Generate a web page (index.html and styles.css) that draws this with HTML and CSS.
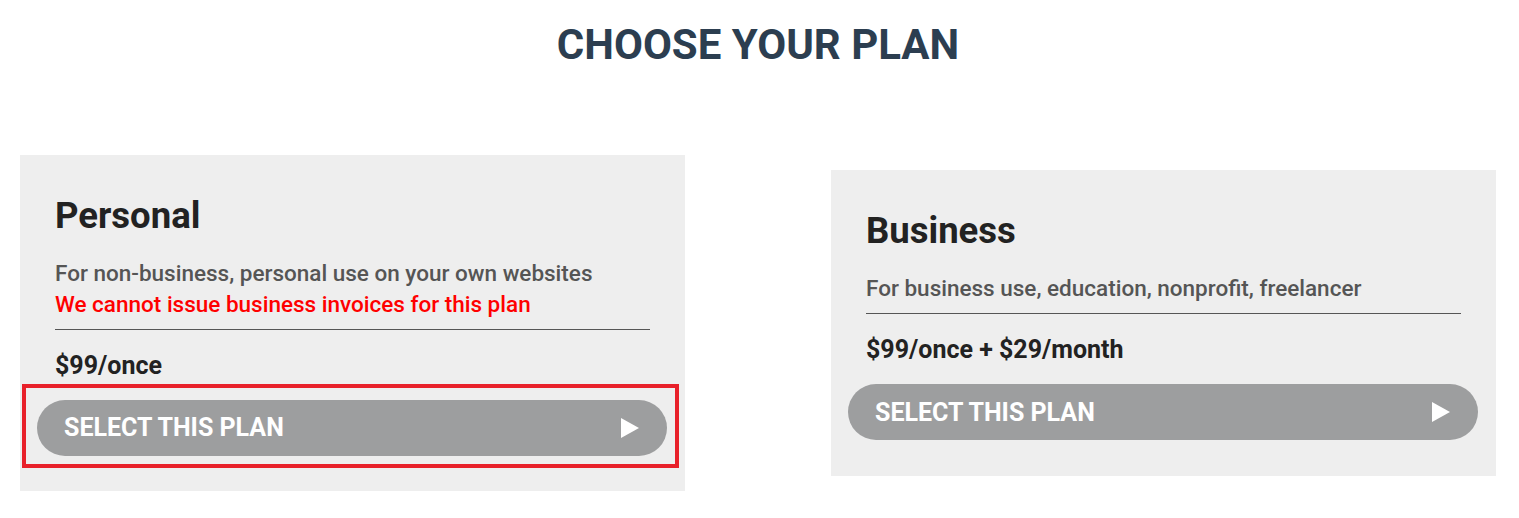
FILE: index.html
```html
<!DOCTYPE html>
<html lang="en">
<head>
  <meta charset="UTF-8">
  <title>Choose your plan</title>
  <link rel="stylesheet" href="styles.css">
</head>
<body>
  <div class="plans">
    <h1 class="plans-title">CHOOSE YOUR PLAN</h1>

    <div class="plan-list">
      <div class="plan">
        <h2 class="plan-name">Personal</h2>
        <p class="plan-desc">For non-business, personal use on your own websites</p>
        <p class="plan-note">We cannot issue business invoices for this plan</p>
        <hr class="plan-rule">
        <p class="plan-price">$99/once</p>
        <div class="plan-action">
          <a class="plan-btn" href="#">
            <span>SELECT THIS PLAN</span>
            <svg class="plan-arrow" width="18" height="20" viewBox="0 0 18 20"><path d="M0 0 L18 10 L0 20 Z" fill="#fff"/></svg>
          </a>
          <div class="highlight"></div>
        </div>
      </div>

      <div class="plan">
        <h2 class="plan-name">Business</h2>
        <p class="plan-desc">For business use, education, nonprofit, freelancer</p>
        <hr class="plan-rule">
        <p class="plan-price">$99/once + $29/month</p>
        <div class="plan-action">
          <a class="plan-btn" href="#">
            <span>SELECT THIS PLAN</span>
            <svg class="plan-arrow" width="18" height="20" viewBox="0 0 18 20"><path d="M0 0 L18 10 L0 20 Z" fill="#fff"/></svg>
          </a>
        </div>
      </div>
    </div>
  </div>
</body>
</html>
```

FILE: styles.css
```css
body {
  margin: 0;
  font-family: Roboto, "Liberation Sans", sans-serif;
  background: #fff;
  color: #222;
}
.plans {
  padding: 0 23px 0 20px;
}
.plans-title {
  margin: 0;
  padding-top: 21px;
  font-size: 42px;
  line-height: 48px;
  font-weight: 700;
  text-align: center;
  color: #2c3e50;
}
.plan-list {
  display: flex;
  align-items: center;
  gap: 146px;
  height: 336px;
  margin-top: 86px;
}
.plan {
  width: 665px;
  box-sizing: border-box;
  padding: 41px 35px 36px;
  background: #eeeeee;
}
.plan-name {
  margin: 0 0 22px;
  font-size: 36.5px;
  line-height: 40px;
  font-weight: 700;
  color: #222;
}
.plan-desc,
.plan-note {
  margin: 0;
  font-size: 22.5px;
  line-height: 31px;
  font-weight: 500;
  color: #555;
}
.plan-note {
  color: #ff0000;
}
.plan-rule {
  margin: 9px 0 0;
  border: 0;
  border-top: 1px solid #555;
}
.plan-price {
  margin: 0;
  padding: 20px 0 18px;
  font-size: 25px;
  line-height: 32px;
  font-weight: 700;
  color: #222;
}
.plan-action {
  position: relative;
  margin: 0 -17px 0 -18px;
}
.plan-btn {
  display: flex;
  align-items: center;
  justify-content: space-between;
  height: 56px;
  padding: 0 28px 0 27px;
  border-radius: 28px;
  background: #9d9e9f;
  color: #fff;
  font-size: 25px;
  font-weight: 700;
  text-decoration: none;
}
.plan-arrow {
  display: block;
}
.highlight {
  position: absolute;
  left: -15px;
  right: -12px;
  top: -16px;
  bottom: -12px;
  border: 4px solid #e8202a;
}
```
